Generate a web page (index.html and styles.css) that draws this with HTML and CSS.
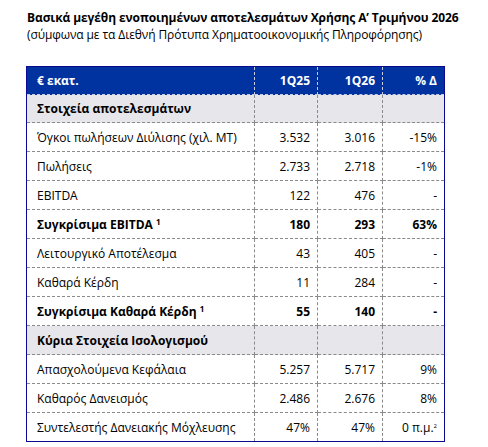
FILE: index.html
```html
<!DOCTYPE html>
<html lang="el">
<head>
<meta charset="utf-8">
<link rel="stylesheet" href="styles.css">
</head>
<body>
<div class="page">
  <div class="title">Βασικά μεγέθη ενοποιημένων αποτελεσμάτων Χρήσης Α’ Τριμήνου 2026</div>
  <div class="subtitle">(σύμφωνα με τα Διεθνή Πρότυπα Χρηματοοικονομικής Πληροφόρησης)</div>
  <table class="fin">
    <colgroup><col class="c1"><col class="c2"><col class="c3"><col class="c4"></colgroup>
    <thead>
      <tr><th class="lbl">€ εκατ.</th><th>1Q25</th><th>1Q26</th><th>% Δ</th></tr>
    </thead>
    <tbody>
      <tr class="sec"><td class="lbl">Στοιχεία αποτελεσμάτων</td><td></td><td></td><td></td></tr>
      <tr><td class="lbl">Όγκοι πωλήσεων Διύλισης (χιλ. MT)</td><td>3.532</td><td>3.016</td><td>-15%</td></tr>
      <tr><td class="lbl">Πωλήσεις</td><td>2.733</td><td>2.718</td><td>-1%</td></tr>
      <tr><td class="lbl">EBITDA</td><td>122</td><td>476</td><td>-</td></tr>
      <tr class="b"><td class="lbl">Συγκρίσιμα EBITDA <sup>1</sup></td><td>180</td><td>293</td><td>63%</td></tr>
      <tr><td class="lbl">Λειτουργικό Αποτέλεσμα</td><td>43</td><td>405</td><td>-</td></tr>
      <tr><td class="lbl">Καθαρά Κέρδη</td><td>11</td><td>284</td><td>-</td></tr>
      <tr class="b"><td class="lbl">Συγκρίσιμα Καθαρά Κέρδη <sup>1</sup></td><td>55</td><td>140</td><td>-</td></tr>
      <tr class="sec"><td class="lbl">Κύρια Στοιχεία Ισολογισμού</td><td></td><td></td><td></td></tr>
      <tr><td class="lbl">Απασχολούμενα Κεφάλαια</td><td>5.257</td><td>5.717</td><td>9%</td></tr>
      <tr><td class="lbl">Καθαρός Δανεισμός</td><td>2.486</td><td>2.676</td><td>8%</td></tr>
      <tr><td class="lbl">Συντελεστής Δανειακής Μόχλευσης</td><td>47%</td><td>47%</td><td>0 π.μ.<sup class="s2">2</sup></td></tr>
    </tbody>
  </table>
</div>
</body>
</html>
```
FILE: styles.css
```css
html, body { margin: 0; padding: 0; background: #fff; }
body { font-family: "Open Sans", "DejaVu Sans", sans-serif; color: #000; }
.page { padding: 9px 26px 0 26px; }
.title { font-size: 12px; font-weight: 700; line-height: 17px; padding-left: 1px; letter-spacing: -0.1px; }
.subtitle { font-size: 12px; line-height: 17px; padding-left: 1px; letter-spacing: -0.1px; }
.fin {
  margin-top: 23px;
  border-collapse: collapse;
  width: 418px;
  table-layout: fixed;
  border: 1px solid #0a0a90;
  font-size: 12px;
}
.c1 { width: 228px; }
.c2 { width: 63px; }
.c3 { width: 65px; }
.c4 { width: 62px; }
.fin th, .fin td {
  height: 29px;
  padding: 0 7px 0 10px;
  text-align: right;
  border: 1px dashed #8a8a8a;
  white-space: nowrap;
  box-sizing: border-box;
}
.fin tbody tr:first-child td { height: 28px; }
.fin th { height: 28px; background: #0033a0; color: #fff; font-weight: 700; border-color: #c8cbe0; border-top: 1px solid #0a0a90; border-bottom-color: #c8cbe0; }
.fin th:first-child, .fin td:first-child { border-left: 1px solid #0a0a90; }
.fin th:last-child, .fin td:last-child { border-right: 1px solid #0a0a90; }
.fin tr:last-child td { border-bottom: 1px solid #0a0a90; }
.fin .lbl { text-align: left; }
.fin .sec td { background: #e7e6eb; font-weight: 700; }
.fin .b td { font-weight: 700; }
sup { font-size: 8px; vertical-align: 4px; line-height: 0; }
sup.s2 { font-size: 6px; }
```
